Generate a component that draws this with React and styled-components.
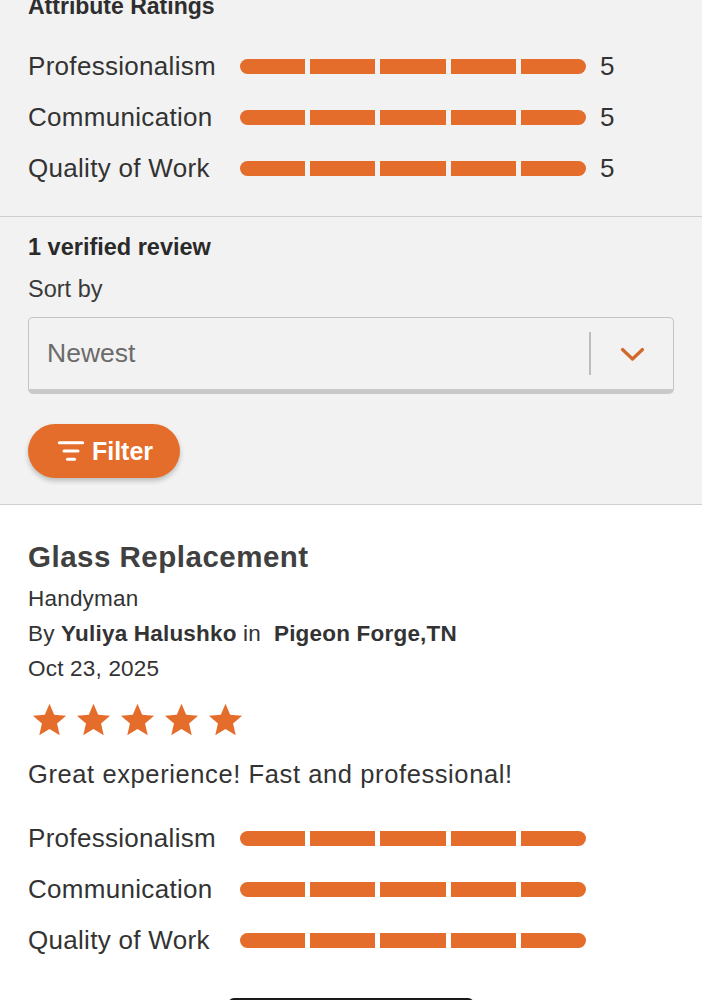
import React from "react";
import styled, { createGlobalStyle } from "styled-components";
import { ListFilter } from "lucide-react";

const ORANGE = "#e56d2b";

const GlobalStyle = createGlobalStyle`
	html, body {
		margin: 0;
		padding: 0;
		background: #ffffff;
	}
	body {
		font-family: "Liberation Sans", Arial, Helvetica, sans-serif;
		color: #333333;
		overflow: hidden;
	}
	* {
		box-sizing: border-box;
	}
`;

const Page = styled.div`
	width: 702px;
	height: 1000px;
	overflow: hidden;
	display: flex;
	flex-direction: column;
`;

const GraySection = styled.section`
	background: #f2f2f2;
	padding: ${(props) => props.$pad};
	border-bottom: 1.5px solid #cfcfcf;
	display: flex;
	flex-direction: column;
	align-items: flex-start;
`;

const WhiteSection = styled.section`
	background: #ffffff;
	padding: 34px 28px 0 28px;
	display: flex;
	flex-direction: column;
	flex: 1;
`;

const Heading = styled.h3`
	margin: -8px 0 21px 0;
	font-size: 23px;
	line-height: 28px;
	font-weight: 700;
	color: #2e2e2e;
`;

const RatingList = styled.div`
	display: flex;
	flex-direction: column;
	align-self: stretch;
`;

const RatingRow = styled.div`
	height: 51px;
	display: flex;
	align-items: center;
`;

const RatingLabel = styled.span`
	width: 212px;
	font-size: 26px;
	letter-spacing: 0.3px;
	color: #333333;
	white-space: nowrap;
`;

const Bar = styled.div`
	display: flex;
	gap: 5px;
	width: 346px;
	height: 15px;
`;

const Segment = styled.div`
	flex: 1;
	background: ${ORANGE};
	&:first-child {
		border-radius: 8px 0 0 8px;
	}
	&:last-child {
		border-radius: 0 8px 8px 0;
	}
`;

const Score = styled.span`
	margin-left: 14px;
	font-size: 26px;
	color: #333333;
`;

const ReviewCount = styled.div`
	font-size: 23.5px;
	line-height: 28px;
	font-weight: 700;
	color: #2a2a2a;
`;

const SortLabel = styled.div`
	margin-top: 14px;
	font-size: 23.5px;
	line-height: 28px;
	color: #3a3a3a;
`;

const Select = styled.div`
	margin-top: 14px;
	align-self: stretch;
	height: 77px;
	border: 1.5px solid #c4c4c4;
	border-bottom: 5px solid #c9c9c9;
	border-radius: 5px;
	display: flex;
	align-items: center;
	padding-left: 18px;
`;

const SelectValue = styled.span`
	flex: 1;
	font-size: 26.5px;
	color: #6b6b6b;
`;

const SelectDivider = styled.span`
	width: 2px;
	height: 43px;
	background: #bdbdbd;
`;

const SelectArrow = styled.span`
	width: 82px;
	display: flex;
	justify-content: center;
	padding-top: 2px;
`;

const FilterButton = styled.button`
	margin-top: 30px;
	height: 54px;
	width: 152px;
	border: none;
	border-radius: 27px;
	background: ${ORANGE};
	color: #ffffff;
	font-family: inherit;
	font-size: 25px;
	font-weight: 700;
	display: flex;
	align-items: center;
	justify-content: center;
	gap: 7px;
	padding: 0 0 0 2px;
	box-shadow: 0 3px 5px rgba(0, 0, 0, 0.22);
`;

const Title = styled.h2`
	margin: 0 0 6px 0;
	font-size: 29.5px;
	line-height: 36px;
	letter-spacing: 0.5px;
	font-weight: 700;
	color: #404040;
`;

const Meta = styled.div`
	font-size: 22.5px;
	line-height: 35px;
	letter-spacing: 0.2px;
	color: #333333;
	white-space: pre;
	b {
		font-weight: 700;
	}
`;

const Stars = styled.div`
	margin-top: 16px;
	display: flex;
	gap: 7px;
	padding-left: 3px;
`;

const Comment = styled.p`
	margin: 18px 0 22px 0;
	font-size: 25.5px;
	line-height: 34px;
	letter-spacing: 0.6px;
	color: #333333;
`;

const BottomButton = styled.div`
	margin: 32px auto 0 auto;
	width: 246px;
	height: 40px;
	border: 2px solid #1a1a1a;
	border-radius: 6px;
	flex-shrink: 0;
`;

const attributes = ["Professionalism", "Communication", "Quality of Work"];

function RatingBar() {
	return (
		<Bar>
			{[0, 1, 2, 3, 4].map((i) => (
				<Segment key={i} />
			))}
		</Bar>
	);
}

function Star() {
	return (
		<svg width="37" height="37" viewBox="0 0 24 24">
			<path
				fill={ORANGE}
				d="M12 1.2l3.05 7.1 7.7.65-5.85 5.05 1.75 7.55L12 17.55 5.35 21.55l1.75-7.55L1.25 8.95l7.7-.65z"
			/>
		</svg>
	);
}

function Chevron() {
	return (
		<svg width="25" height="15" viewBox="0 0 25 15">
			<path
				d="M2.5 2.5l10 9.5 10-9.5"
				fill="none"
				stroke="#d2692c"
				strokeWidth="3.2"
				strokeLinecap="round"
				strokeLinejoin="round"
			/>
		</svg>
	);
}

export default function App() {
	return (
		<>
			<GlobalStyle />
			<Page>
				<GraySection $pad="0 28px 22px 28px">
					<Heading>Attribute Ratings</Heading>
					<RatingList>
						{attributes.map((name) => (
							<RatingRow key={name}>
								<RatingLabel>{name}</RatingLabel>
								<RatingBar />
								<Score>5</Score>
							</RatingRow>
						))}
					</RatingList>
				</GraySection>

				<GraySection $pad="16px 28px 26px 28px">
					<ReviewCount>1 verified review</ReviewCount>
					<SortLabel>Sort by</SortLabel>
					<Select>
						<SelectValue>Newest</SelectValue>
						<SelectDivider />
						<SelectArrow>
							<Chevron />
						</SelectArrow>
					</Select>
					<FilterButton type="button">
						<ListFilter size={28} strokeWidth={2.6} />
						Filter
					</FilterButton>
				</GraySection>

				<WhiteSection>
					<Title>Glass Replacement</Title>
					<Meta>Handyman</Meta>
					<Meta>
						By <b>Yuliya Halushko</b> in  <b>Pigeon Forge,TN</b>
					</Meta>
					<Meta>Oct 23, 2025</Meta>
					<Stars>
						{[0, 1, 2, 3, 4].map((i) => (
							<Star key={i} />
						))}
					</Stars>
					<Comment>Great experience! Fast and professional!</Comment>
					<RatingList>
						{attributes.map((name) => (
							<RatingRow key={name}>
								<RatingLabel>{name}</RatingLabel>
								<RatingBar />
							</RatingRow>
						))}
					</RatingList>
					<BottomButton />
				</WhiteSection>
			</Page>
		</>
	);
}
